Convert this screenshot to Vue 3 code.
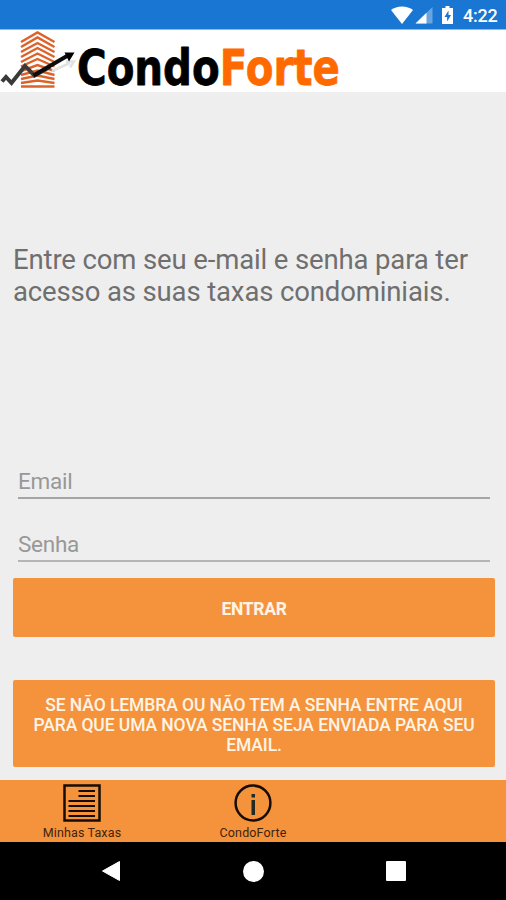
<script setup>
import { ref } from 'vue';

const email = ref('');
const senha = ref('');

// Height of each floor line in the logo's building
const floors = [
  { y: 41, rise: 8.5 },
  { y: 46, rise: 8.5 },
  { y: 51, rise: 8 },
  { y: 56, rise: 8 },
  { y: 61, rise: 7.5 },
  { y: 65.5, rise: 6.5 },
  { y: 70, rise: 5 },
  { y: 74, rise: 3.5 },
  { y: 78, rise: 2.5 },
  { y: 82, rise: 1.5 },
  { y: 85.5, rise: -1 },
];
</script>

<template>
  <div class="screen">
    <div class="status-bar">
      <svg class="status-icons" viewBox="0 0 68 29">
        <!-- Wifi -->
        <path d="M11 6.500c4.300 0 8 1.300 11 3.600L11 24 0 10.100C3 7.800 6.700 6.500 11 6.500z" fill="#fff" />
        <!-- Signal -->
        <path d="M41.500 7v16.500H24.500z" fill="#fff" opacity="0.35" />
        <path d="M35.500 12.800v10.700H24.500z" fill="#fff" />
        <!-- Battery -->
        <path d="M54.500 6h4v2h3.500v16H51V8h3.500z" fill="#fff" />
        <path d="M57.500 10.500l-4 6.500h2.600v4.500l4-6.600h-2.600z" fill="#1976d2" />
      </svg>
      <span class="clock">4:22</span>
    </div>

    <header class="header">
      <svg class="logo" viewBox="0 30 350 62">
        <path
          v-for="f in floors"
          :key="f.y"
          :d="`M21 ${f.y + 1} L37.500 ${f.y - f.rise} L54.500 ${f.y + 1}`"
          class="floor"
        />
        <path d="M52 71l18-8M66 61.500l8 0-4 6" class="arrow-shadow" />
        <path d="M2 81.500L6 77l5.500 6L25 66l9.500 9.500L50 67" class="trend trend-start" />
        <path d="M33.500 75.500L67 56" class="trend" />
        <path d="M64.500 52.500l10 0-5.500 9z" />
        <text x="77" y="84.500" textLength="263" lengthAdjust="spacingAndGlyphs" class="brand">Condo<tspan class="brand-accent">Forte</tspan></text>
      </svg>
    </header>

    <main class="content">
      <p class="intro">Entre com seu e-mail e senha para ter<br />acesso as suas taxas condominiais.</p>

      <form class="login" @submit.prevent>
        <input v-model="email" class="field" type="text" placeholder="Email" />
        <input v-model="senha" class="field field-senha" type="password" placeholder="Senha" />
        <button class="btn btn-entrar" type="submit">ENTRAR</button>
        <button class="btn btn-reset" type="button">
          SE NÃO LEMBRA OU NÃO TEM A SENHA ENTRE AQUI<br />PARA QUE UMA NOVA SENHA SEJA ENVIADA PARA SEU<br />EMAIL.
        </button>
      </form>
    </main>

    <nav class="tabs">
      <div class="tab">
        <svg class="tab-icon" viewBox="0 0 38 38">
          <rect x="1.500" y="1.500" width="35" height="35" class="line" />
          <path d="M15.500 7H32M15.500 12H32M5.500 17H32M5.500 22H32M5.500 27H32M5.500 32H32" class="line row" />
        </svg>
        <span class="tab-label">Minhas Taxas</span>
      </div>
      <div class="tab">
        <svg class="tab-icon" viewBox="0 0 38 38">
          <circle cx="19" cy="19" r="17.400" class="line" />
          <path d="M17.500 10h3.500v3.500h-3.500zM17.500 16h3.500v15h-3.500z" fill="#222a26" />
        </svg>
        <span class="tab-label">CondoForte</span>
      </div>
    </nav>

    <div class="android-nav">
      <svg viewBox="0 0 20 22" class="nav-back"><path d="M18.500 1.500v19L1.500 11z" /></svg>
      <span class="nav-home"></span>
      <span class="nav-recent"></span>
    </div>
  </div>
</template>

<style>
body {
  margin: 0;
}
</style>

<style scoped>
.screen {
  display: flex;
  flex-direction: column;
  width: 506px;
  height: 900px;
  background: #eee;
  font-family: Roboto, sans-serif;
  overflow: hidden;
}

.status-bar {
  display: flex;
  align-items: center;
  justify-content: flex-end;
  gap: 4px;
  box-sizing: border-box;
  height: 30px;
  padding-right: 9px;
  background: #1976d2;
  border-bottom: 1px solid #8dbbe9;
  flex-shrink: 0;
}
.status-icons {
  width: 68px;
  height: 29px;
}
.clock {
  width: 34px;
  margin-top: 2px;
  font-size: 18px;
  font-weight: 500;
  letter-spacing: -0.2px;
  color: #fff;
}

.header {
  height: 62px;
  background: #fff;
  flex-shrink: 0;
}
.logo {
  display: block;
  width: 350px;
  height: 62px;
  overflow: visible;
}
.floor {
  fill: none;
  stroke: #dc622a;
  stroke-width: 2.4;
}
.trend {
  fill: none;
  stroke: #0c0c0c;
  stroke-width: 4;
}
.trend-start {
  stroke: #3a3a3a;
}
.arrow-shadow {
  fill: none;
  stroke: #e2e2e2;
  stroke-width: 2.5;
}
.brand {
  fill: #000;
  stroke: #000;
  stroke-width: 0.8;
  stroke-linejoin: round;
  font-family: 'DejaVu Sans', sans-serif;
  font-size: 49px;
  font-weight: 700;
}
.brand-accent {
  fill: #ff6a00;
  stroke: #ff6a00;
}

.content {
  display: flex;
  flex-direction: column;
  justify-content: space-between;
  box-sizing: border-box;
  height: 688px;
  padding: 152px 11px 13px 13px;
  flex-shrink: 0;
}
.intro {
  margin: 0;
  font-size: 27.500px;
  line-height: 32px;
  letter-spacing: -0.13px;
  white-space: nowrap;
  color: #6f6f6f;
}

.login {
  display: flex;
  flex-direction: column;
}
.field {
  box-sizing: border-box;
  height: 34px;
  margin: 0 5px 29px;
  padding: 0;
  border: 0;
  border-bottom: 2px solid #a5a5a5;
  border-radius: 0;
  outline: none;
  background: transparent;
  font-family: inherit;
  font-size: 22.500px;
  line-height: 28px;
  letter-spacing: -0.25px;
}
.field-senha {
  margin-bottom: 16px;
  border-bottom-color: #b5b5b5;
}
.field::placeholder {
  color: #989898;
  opacity: 1;
}
.btn {
  padding: 0;
  border: 0;
  border-radius: 2px;
  background: #f4933c;
  color: #fff4e6;
  font-family: inherit;
  font-size: 17.500px;
  font-weight: 500;
  line-height: 20px;
  letter-spacing: -0.09px;
  white-space: nowrap;
}
.btn-entrar {
  height: 59px;
  margin-bottom: 43px;
  padding-top: 2px;
  font-weight: 700;
  letter-spacing: -0.3px;
}
.btn-reset {
  height: 87px;
  padding-top: 2px;
}

.tabs {
  display: grid;
  grid-template-columns: 164px 178px 164px;
  height: 62px;
  background: #f4933c;
  flex-shrink: 0;
}
.tab {
  display: flex;
  flex-direction: column;
  align-items: center;
  padding-top: 4px;
}
.tab-icon {
  width: 38px;
  height: 38px;
}
.line {
  fill: none;
  stroke: #160c03;
  stroke-width: 2.5;
}
.row {
  stroke-width: 2.2;
}
.tab-label {
  margin-top: 3px;
  font-size: 12.500px;
  line-height: 15px;
  letter-spacing: 0.13px;
  color: #3f230b;
}

.android-nav {
  display: flex;
  align-items: center;
  justify-content: space-between;
  box-sizing: border-box;
  height: 58px;
  padding: 0 100px 0 101px;
  background: #000;
  flex-shrink: 0;
}
.nav-back {
  width: 20px;
  height: 22px;
  fill: #fff;
  stroke: #fff;
  stroke-linejoin: round;
}
.nav-home {
  width: 21px;
  height: 21px;
  border-radius: 50%;
  background: #fff;
}
.nav-recent {
  width: 20px;
  height: 20px;
  border-radius: 1px;
  background: #fff;
}
</style>
